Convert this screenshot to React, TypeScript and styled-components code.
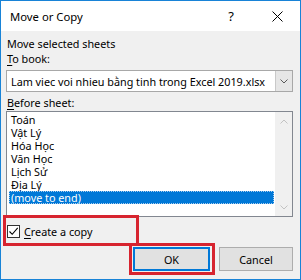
import React from "react";
import styled, { createGlobalStyle } from "styled-components";

const Global = createGlobalStyle`
  html, body { margin: 0; padding: 0; background: #ffffff; }
  * { box-sizing: border-box; }
  body { font-family: "Noto Sans", "Open Sans", sans-serif; font-size: 10.8px; color: #000; }
`;

const Window = styled.div`
  width: 301px;
  height: 280px;
  border: 1px solid #1883d7;
  background: #f0f0f0;
  display: flex;
  flex-direction: column;
`;

const TitleBar = styled.div`
  height: 30px;
  background: #ffffff;
  display: flex;
  align-items: center;
  padding-left: 9px;
`;

const Title = styled.div`
  flex: 1;
  font-size: 11.3px;
  line-height: 15px;
`;

const CaptionButton = styled.div`
  width: 46px;
  height: 30px;
  display: flex;
  align-items: center;
  justify-content: center;
  font-size: 13px;
`;

const Body = styled.div`
  flex: 1;
  display: flex;
  flex-direction: column;
  padding: 5px 7px 0 5px;
`;

const Label = styled.div<{ $mt?: number }>`
  line-height: 15px;
  padding-left: 1px;
  margin-top: ${(p) => p.$mt ?? 0}px;
`;

const Key = styled.span`
  text-decoration: underline;
  text-underline-offset: 2px;
`;

const Combo = styled.div`
  margin-top: 4px;
  height: 22px;
  border: 1px solid #a8a8a8;
  background: #ffffff;
  display: flex;
  align-items: stretch;
`;

const ComboText = styled.div`
  flex: 1;
  display: flex;
  align-items: center;
  padding-left: 4px;
  white-space: nowrap;
  overflow: hidden;
`;

const ComboButton = styled.div`
  width: 17px;
  background: #e6e6e6;
  border-left: 1px solid #c9c9c9;
  display: flex;
  align-items: center;
  justify-content: center;
`;

const ListBox = styled.div`
  margin-top: 1px;
  height: 106px;
  border: 1px solid #828790;
  background: #ffffff;
  display: flex;
`;

const Items = styled.div`
  flex: 1;
  padding: 1px 1px 0 2px;
  display: flex;
  flex-direction: column;
`;

const Item = styled.div<{ $selected?: boolean }>`
  height: 13px;
  line-height: 13px;
  padding-left: 2px;
  white-space: nowrap;
  background: ${(p) => (p.$selected ? "#0078d7" : "transparent")};
  color: ${(p) => (p.$selected ? "#ffffff" : "#000000")};
  outline: ${(p) => (p.$selected ? "1px dotted #a9cdee" : "none")};
  outline-offset: -1px;
`;

const ScrollBar = styled.div`
  width: 17px;
  background: #f0f0f0;
  display: flex;
  flex-direction: column;
  justify-content: space-between;
  align-items: center;
  padding: 7px 0 6px;
`;

const CheckRow = styled.label`
  position: relative;
  margin-top: 7px;
  height: 15px;
  display: flex;
  align-items: center;
  gap: 4px;
  padding-left: 1px;
  &::after {
    content: "";
    position: absolute;
    left: -3px;
    top: -9px;
    width: 130px;
    height: 25px;
    border: 3px solid #d7242f;
    pointer-events: none;
  }
`;

const Box = styled.span`
  width: 13px;
  height: 13px;
  border: 1px solid #333333;
  background: #ffffff;
  display: flex;
  align-items: center;
  justify-content: center;
`;

const ButtonRow = styled.div`
  margin-top: 8px;
  display: flex;
  justify-content: flex-end;
  gap: 9px;
`;

const Button = styled.div<{ $w: number; $default?: boolean }>`
  position: relative;
  width: ${(p) => p.$w}px;
  height: 24px;
  background: #e1e1e1;
  border: ${(p) => (p.$default ? "2px solid #0078d7" : "1px solid #adadad")};
  display: flex;
  align-items: center;
  justify-content: center;
  &::after {
    content: "";
    display: ${(p) => (p.$default ? "block" : "none")};
    position: absolute;
    left: -6px;
    top: -6px;
    right: -7px;
    bottom: -6px;
    border: 3px solid #d7242f;
    pointer-events: none;
  }
`;

const Chevron = ({ up, color }: { up?: boolean; color: string }) => (
  <svg width="8" height="5" viewBox="0 0 8 5">
    <path
      d={up ? "M0.5 4.5 L4 1 L7.5 4.5" : "M0.5 0.5 L4 4 L7.5 0.5"}
      fill="none"
      stroke={color}
      strokeWidth="1"
    />
  </svg>
);

const sheets = ["Toán", "Vật Lý", "Hóa Học", "Văn Học", "Lịch Sử", "Địa Lý"];

export default function App() {
  return (
    <>
      <Global />
      <Window>
        <TitleBar>
          <Title>Move or Copy</Title>
          <CaptionButton>?</CaptionButton>
          <CaptionButton>
            <svg width="11" height="11" viewBox="0 0 11 11">
              <path d="M0.5 0.5 L10.5 10.5 M10.5 0.5 L0.5 10.5" stroke="#000" strokeWidth="1" />
            </svg>
          </CaptionButton>
        </TitleBar>
        <Body>
          <Label>Move selected sheets</Label>
          <Label>
            <Key>T</Key>o book:
          </Label>
          <Combo>
            <ComboText>Lam viec voi nhieu bằng tinh trong Excel 2019.xlsx</ComboText>
            <ComboButton>
              <Chevron color="#5a5a5a" />
            </ComboButton>
          </Combo>
          <Label $mt={3}>
            <Key>B</Key>efore sheet:
          </Label>
          <ListBox>
            <Items>
              {sheets.map((s) => (
                <Item key={s}>{s}</Item>
              ))}
              <Item $selected>(move to end)</Item>
            </Items>
            <ScrollBar>
              <Chevron up color="#c2c2c2" />
              <Chevron color="#c2c2c2" />
            </ScrollBar>
          </ListBox>
          <CheckRow>
            <Box>
              <svg width="11" height="11" viewBox="0 0 11 11">
                <path d="M1.5 5.5 L4.2 8.3 L9.7 1.8" fill="none" stroke="#000" strokeWidth="1.1" />
              </svg>
            </Box>
            <span>
              <Key>C</Key>reate a copy
            </span>
          </CheckRow>
          <ButtonRow>
            <Button $w={77} $default>
              OK
            </Button>
            <Button $w={74}>Cancel</Button>
          </ButtonRow>
        </Body>
      </Window>
    </>
  );
}
